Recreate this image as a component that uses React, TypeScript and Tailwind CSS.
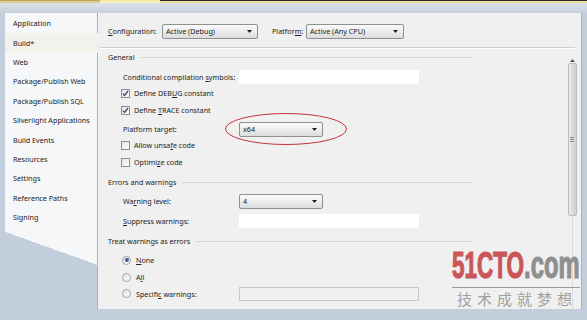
import React from 'react';

const navItems = [
  'Application',
  'Build*',
  'Web',
  'Package/Publish Web',
  'Package/Publish SQL',
  'Silverlight Applications',
  'Build Events',
  'Resources',
  'Settings',
  'Reference Paths',
  'Signing',
];

function Arrow() {
  return (
    <svg width="5" height="3" viewBox="0 0 5 3">
      <path d="M0 0h5L2.5 3z" fill="#1b1b1b" />
    </svg>
  );
}

function Select({ value, className }: { value: string; className: string }) {
  return (
    <div
      className={`flex h-[15px] items-center justify-between rounded-[2px] border border-[#8e8f8f] bg-gradient-to-b from-[#fbfbfb] via-[#ececec] to-[#dcdcdc] pl-[3px] pr-[5px] ${className}`}
    >
      <span>{value}</span>
      <Arrow />
    </div>
  );
}

function Checkbox({ checked }: { checked?: boolean }) {
  return (
    <span className="flex h-[9px] w-[9px] items-center justify-center border border-[#8e8f8f] bg-gradient-to-br from-[#e2e2e2] to-white">
      {checked && (
        <svg width="7" height="7" viewBox="0 0 7 7">
          <path d="M1 3.6l1.6 1.8L6 1" fill="none" stroke="#3a4b6e" strokeWidth={1.3} />
        </svg>
      )}
    </span>
  );
}

function Radio({ selected }: { selected?: boolean }) {
  return (
    <span className="flex h-[9px] w-[9px] items-center justify-center rounded-full border border-[#a3a3a3] bg-gradient-to-br from-[#e0e0e0] to-white">
      {selected && <span className="h-[4px] w-[4px] rounded-full bg-[#3d5f8f]" />}
    </span>
  );
}

function SectionHeader({ title, className }: { title: string; className: string }) {
  return (
    <div className={`flex w-[365px] items-center ${className}`}>
      <span>{title}</span>
      <div className="ml-[6px] h-px flex-1 bg-[#d2d2d2]" />
    </div>
  );
}

export default function App() {
  return (
    <div className="relative flex h-[320px] w-[587px] flex-col overflow-hidden bg-[#c3cedc] text-[7.2px] text-[#222] [font-family:'Noto_Sans','Liberation_Sans',sans-serif]">
      {/* title strip */}
      <div className="flex h-[1px]">
        <div className="w-[100px] bg-[#b9a76c]" />
        <div className="w-[60px] bg-[#f4e8a6]" />
        <div className="flex-1 bg-[#2a2a2a]" />
      </div>
      <div className="flex h-[2px]">
        <div className="w-[100px] bg-[#dccd8f]" />
        <div className="w-[60px] bg-[#f7eeb8]" />
        <div className="flex-1 bg-[#e8dd9e]" />
      </div>
      <div className="h-[10px] bg-gradient-to-b from-[#dde2e7] to-[#c5d0dd]" />

      <div className="flex flex-1 px-[5px] pb-[11px]">
        {/* left tabs */}
        <div className="flex w-[92px] flex-col bg-[linear-gradient(199.7deg,#f6f7f8_237px,#c3cedc_237px)] pt-px">
          {navItems.map((item) => (
            <div
              key={item}
              className={`flex h-[19.4px] items-center pl-[8px] ${
                item === 'Build*' ? 'relative z-10 -mr-px bg-[#f2f1ec]' : ''
              }`}
            >
              {item}
            </div>
          ))}
        </div>

        {/* property page */}
        <div className="flex flex-1 flex-col border-l border-r border-[#a9b1bb] bg-[#f0f0f0]">
          <div className="mt-[10px] flex h-[16px] items-center pl-[10px]">
            <span className="w-[54px]">
              <u>C</u>onfiguration:
            </span>
            <Select value="Active (Debug)" className="w-[96px]" />
            <span className="ml-[14px] w-[34px]">
              Platfor<u>m</u>:
            </span>
            <Select value="Active (Any CPU)" className="w-[98px]" />
          </div>

          <div className="ml-[2px] mr-[6px] mt-[8px] h-[2px] border-b border-t border-b-white border-t-[#cdcdcd]" />

          <div className="flex flex-1">
            <div className="flex flex-1 flex-col pl-[10px]">
              <SectionHeader title="General" className="mt-px h-[14px]" />

              <div className="mt-[5px] flex h-[16px] items-center pl-[15px]">
                <span className="w-[116px]">
                  Conditional compilation <u>s</u>ymbols:
                </span>
                <div className="h-[14px] w-[180px] bg-white" />
              </div>
              <div className="flex h-[16px] items-center gap-[4px] pl-[13px]">
                <Checkbox checked />
                <span>
                  Define DEB<u>U</u>G constant
                </span>
              </div>
              <div className="flex h-[18px] items-center gap-[4px] pl-[13px]">
                <Checkbox checked />
                <span>
                  Define <u>T</u>RACE constant
                </span>
              </div>
              <div className="flex h-[20px] items-center pl-[15px]">
                <span className="w-[116px]">Platform target:</span>
                <Select value="x64" className="w-[84px]" />
              </div>
              <div className="flex h-[12px] items-center gap-[4px] pl-[13px]">
                <Checkbox />
                <span>
                  Allow unsa<u>f</u>e code
                </span>
              </div>
              <div className="flex h-[22px] items-center gap-[4px] pl-[13px]">
                <Checkbox />
                <span>
                  Optimi<u>z</u>e code
                </span>
              </div>

              <SectionHeader title="Errors and warnings" className="h-[18px]" />

              <div className="flex h-[20px] items-center pl-[15px]">
                <span className="w-[116px]">
                  Wa<u>r</u>ning level:
                </span>
                <Select value="4" className="w-[84px]" />
              </div>
              <div className="flex h-[20px] items-center pl-[15px]">
                <span className="w-[116px]">
                  <u>S</u>uppress warnings:
                </span>
                <div className="h-[14px] w-[180px] bg-white" />
              </div>

              <SectionHeader title="Treat warnings as errors" className="h-[20px]" />

              <div className="flex h-[18px] items-center gap-[5px] pl-[14px]">
                <Radio selected />
                <span>
                  <u>N</u>one
                </span>
              </div>
              <div className="flex h-[16px] items-center gap-[5px] pl-[14px]">
                <Radio />
                <span>
                  A<u>l</u>l
                </span>
              </div>
              <div className="flex h-[18px] items-center pl-[14px]">
                <div className="flex w-[117px] items-center gap-[5px]">
                  <Radio />
                  <span>
                    Specifi<u>c</u> warnings:
                  </span>
                </div>
                <div className="h-[14px] w-[180px] border border-[#c9c9c9] bg-[#f0f0f0]" />
              </div>
            </div>

            {/* scrollbar */}
            <div className="mr-[4px] mt-[8px] flex w-[10px] flex-col items-center">
              <div className="flex h-[6px] items-center justify-center">
                <svg width="5" height="3" viewBox="0 0 5 3">
                  <path d="M0 3h5L2.5 0z" fill="#555" />
                </svg>
              </div>
              <div className="flex h-[153px] w-[9px] items-center justify-center rounded-[2px] border border-[#bdbdbd] bg-gradient-to-r from-[#ececec] via-[#dcdcdc] to-[#cfcfcf]">
                <div className="flex h-[5px] w-[4px] flex-col justify-between">
                  <div className="h-px bg-[#8a8a8a]" />
                  <div className="h-px bg-[#8a8a8a]" />
                  <div className="h-px bg-[#8a8a8a]" />
                </div>
              </div>
              <div className="w-px flex-1 bg-[#dadada]" />
            </div>
          </div>
        </div>
      </div>

      {/* red highlight ring */}
      <svg className="absolute left-[224px] top-[112px]" width="124" height="34" viewBox="0 0 124 34">
        <ellipse cx="62" cy="17" rx="60.5" ry="15.5" fill="none" stroke="#c2343a" strokeWidth="1" />
      </svg>

      {/* watermark */}
      <div className="absolute left-[452px] top-[252px] flex w-[128px] flex-col items-start">
        <div className="flex h-[32px] origin-left scale-x-[0.625] items-end whitespace-nowrap font-bold leading-none [font-family:'Liberation_Sans',sans-serif]">
          <span className="text-[36px] text-[#cc5558] [-webkit-text-stroke:1.2px_#cc5558]">51CTO</span>
          <span className="text-[38px] text-[#8f8f8f] [-webkit-text-stroke:1.2px_#8f8f8f]">.com</span>
        </div>
        <div className="mt-[3px] h-px w-[128px] bg-[#9a9a9a]" />
        <div className="mt-[2px] pl-[5px] text-[15px] leading-[18px] tracking-[5px] text-[#a0a0a0] [font-family:'Noto_Sans_CJK_SC',sans-serif]">
          技术成就梦想
        </div>
      </div>
    </div>
  );
}
